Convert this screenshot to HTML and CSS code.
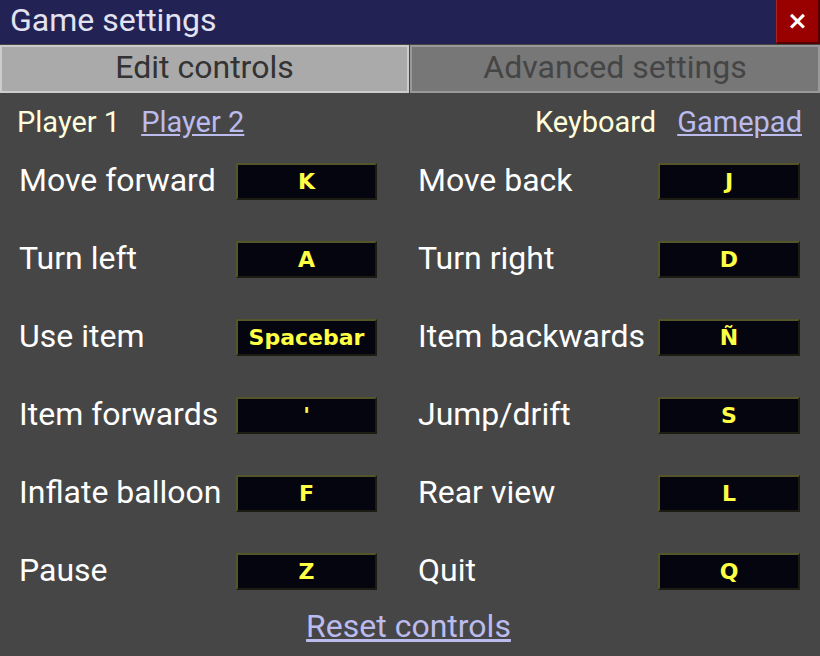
FILE: index.html
```html
<!DOCTYPE html>
<html>
<head>
<meta charset="utf-8">
<link rel="stylesheet" href="styles.css">
</head>
<body>
<div class="window">
  <div class="titlebar">
    <span class="title">Game settings</span>
    <button class="close">×</button>
  </div>
  <div class="tabs">
    <div class="tab active">Edit controls</div>
    <div class="tab">Advanced settings</div>
  </div>
  <div class="content">
    <div class="selectors">
      <div class="group">
        <span class="current">Player 1</span>
        <a class="link" href="#">Player 2</a>
      </div>
      <div class="group">
        <span class="current">Keyboard</span>
        <a class="link" href="#">Gamepad</a>
      </div>
    </div>
    <div class="grid">
      <span class="label">Move forward</span><span class="key">K</span><span></span>
      <span class="label">Move back</span><span class="key">J</span>
      <span class="label">Turn left</span><span class="key">A</span><span></span>
      <span class="label">Turn right</span><span class="key">D</span>
      <span class="label">Use item</span><span class="key">Spacebar</span><span></span>
      <span class="label">Item backwards</span><span class="key">Ñ</span>
      <span class="label">Item forwards</span><span class="key">'</span><span></span>
      <span class="label">Jump/drift</span><span class="key">S</span>
      <span class="label">Inflate balloon</span><span class="key">F</span><span></span>
      <span class="label">Rear view</span><span class="key">L</span>
      <span class="label">Pause</span><span class="key">Z</span><span></span>
      <span class="label">Quit</span><span class="key">Q</span>
    </div>
    <div class="reset"><a class="link" href="#">Reset controls</a></div>
  </div>
</div>
</body>
</html>
```

FILE: styles.css
```css
* { box-sizing: border-box; }
html, body { margin: 0; padding: 0; }
body {
  width: 820px;
  height: 656px;
  background: #464646;
  font-family: Roboto, "Liberation Sans", sans-serif;
  overflow: hidden;
}
.window { width: 820px; height: 656px; display: flex; flex-direction: column; }
.titlebar {
  height: 44px;
  background: #222255;
  display: flex;
  align-items: center;
  justify-content: space-between;
}
.title {
  color: #e2e2f0;
  font-size: 32px;
  padding-left: 10px;
  line-height: 44px;
  margin-top: -4px;
}
.close {
  width: 44px;
  height: 44px;
  background: #990000;
  border: none;
  border-right: 2px solid #550000;
  border-bottom: 2px solid #550000;
  border-left: 1px solid #aa2222;
  color: #ffffff;
  font-family: "DejaVu Sans", sans-serif;
  font-weight: bold;
  font-size: 25px;
  padding: 0 0 2px 0;
  margin: 0;
}
.tabs {
  display: flex;
  margin-top: 1px;
  height: 48px;
}
.tab {
  height: 48px;
  display: flex;
  align-items: center;
  justify-content: center;
  font-size: 32px;
  border: 2px solid #999999;
  background: #777777;
  color: #454545;
  padding-bottom: 4px;
}
.tab.active {
  width: 409px;
  border-color: #cccccc;
  background: #aaaaaa;
  color: #333333;
  margin-right: 1px;
}
.tab:not(.active) { flex: 1; }
.content {
  flex: 1;
  display: flex;
  flex-direction: column;
  padding: 0 18px 0 17px;
}
.selectors {
  display: flex;
  justify-content: space-between;
  height: 58px;
  align-items: center;
}
.group { display: flex; gap: 21px; font-size: 29px; }
.current { color: #ffffdd; }
.link { color: #bbbbee; text-decoration: underline; }
.grid {
  display: grid;
  grid-template-columns: 219px 141px 39px 242px 142px;
  grid-auto-rows: 37px;
  row-gap: 41px;
  align-items: center;
  margin-top: 12px;
}
.label {
  color: #ffffff;
  font-size: 32px;
  padding-left: 2px;
  white-space: nowrap;
  margin-top: -4px;
}
.key {
  height: 37px;
  background: #05050f;
  border: 2px solid;
  border-color: #55552a #1c1c12 #1c1c12 #55552a;
  color: #ffff44;
  font-family: "DejaVu Sans", sans-serif;
  font-weight: bold;
  font-size: 22px;
  display: flex;
  align-items: center;
  justify-content: center;
}
.reset {
  text-align: center;
  font-size: 32px;
  margin-top: 17px;
  padding-right: 2px;
}
```
